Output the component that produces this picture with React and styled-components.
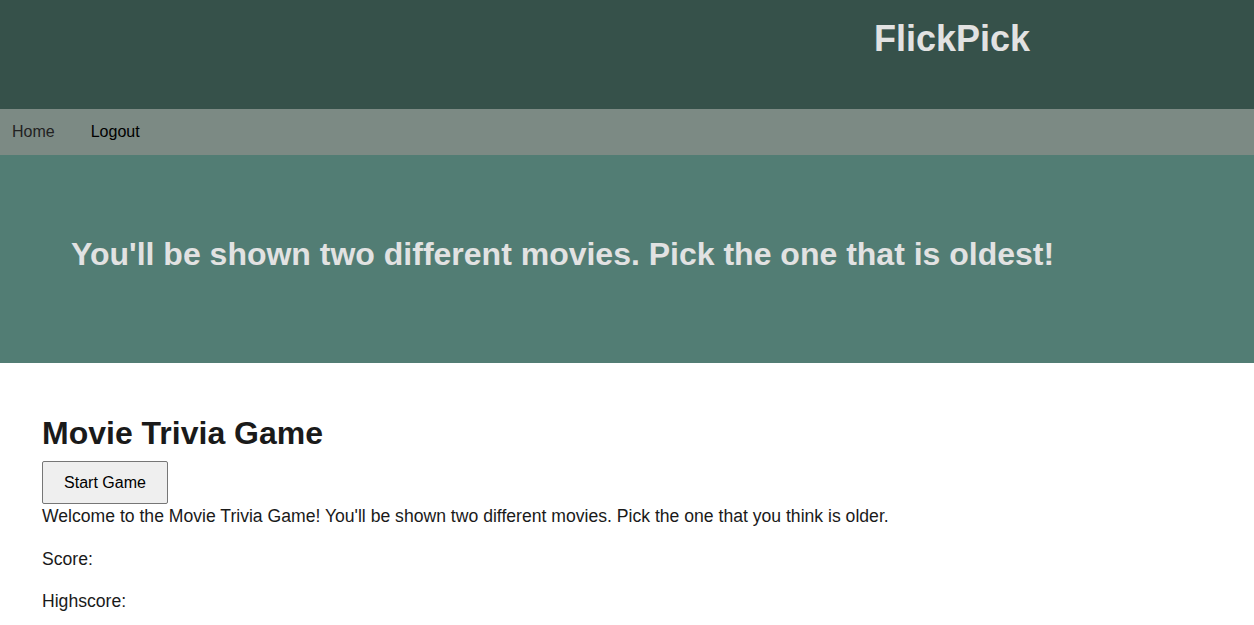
import React from "react";
import styled, { createGlobalStyle } from "styled-components";

const Global = createGlobalStyle`
  html, body { margin: 0; padding: 0; background: #ffffff; }
  body { font-family: "Liberation Sans", Arial, sans-serif; color: #1a1a1a; }
`;

const Header = styled.header`
  height: 109px;
  background: #36514a;
  display: flex;
  align-items: flex-start;
  padding-left: 874px;
  box-sizing: border-box;
`;

const Brand = styled.h1`
  margin: 0;
  padding-top: 17px;
  font-size: 36px;
  line-height: 44px;
  font-weight: 700;
  color: #e2e2e2;
`;

const Nav = styled.nav`
  height: 46px;
  background: #7c8a84;
  display: flex;
  align-items: center;
  padding-left: 12px;
  gap: 36px;
`;

const NavLink = styled.a`
  font-size: 16px;
  color: ${(p) => (p.$dim ? "#222" : "#000")};
  text-decoration: none;
  cursor: pointer;
`;

const Hero = styled.section`
  height: 208px;
  background: #527d74;
  display: flex;
  align-items: center;
  padding: 0 0 10px 71px;
  box-sizing: border-box;
`;

const HeroText = styled.h2`
  margin: 0;
  font-size: 32px;
  font-weight: 700;
  color: #e2e2e2;
`;

const Main = styled.main`
  padding: 52px 42px 0;
`;

const Title = styled.h1`
  margin: 0 0 9px;
  font-size: 32px;
  line-height: 37px;
  font-weight: 700;
  color: #1a1a1a;
`;

const Button = styled.button`
  display: block;
  width: 126px;
  height: 43px;
  font-family: "Liberation Sans", Arial, sans-serif;
  font-size: 16px;
  color: #000;
  background: #efefef;
  border: 1px solid #767676;
  border-radius: 2px;
  padding: 0;
`;

const Para = styled.p`
  margin: ${(p) => (p.$first ? "0" : "17px 0 0")};
  font-size: 17.6px;
  line-height: 25.5px;
  color: #1a1a1a;
`;

export default function App() {
  return (
    <>
      <Global />
      <Header>
        <Brand>FlickPick</Brand>
      </Header>
      <Nav>
        <NavLink $dim>Home</NavLink>
        <NavLink>Logout</NavLink>
      </Nav>
      <Hero>
        <HeroText>You'll be shown two different movies. Pick the one that is oldest!</HeroText>
      </Hero>
      <Main>
        <Title>Movie Trivia Game</Title>
        <Button>Start Game</Button>
        <Para $first>
          Welcome to the Movie Trivia Game! You'll be shown two different movies. Pick the one that you think is older.
        </Para>
        <Para>Score:</Para>
        <Para>Highscore:</Para>
      </Main>
    </>
  );
}
